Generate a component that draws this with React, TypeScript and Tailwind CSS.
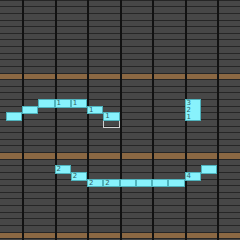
const ROWS = 38;
const BEATS = 8;

type Note = { col: number; row: number; span?: number; labels?: string[] };

const notes: Note[] = [
  // upper phrase
  { col: 1, row: 18 },
  { col: 2, row: 17 },
  { col: 3, row: 16 },
  { col: 4, row: 16, labels: ["1"] },
  { col: 5, row: 16, labels: ["1"] },
  { col: 6, row: 17, labels: ["1"] },
  { col: 7, row: 18, labels: ["1"] },
  { col: 12, row: 16, span: 3, labels: ["3", "2", "1"] },
  // lower phrase
  { col: 4, row: 26, labels: ["2"] },
  { col: 5, row: 27, labels: ["2"] },
  { col: 6, row: 28, labels: ["2"] },
  { col: 7, row: 28, labels: ["2"] },
  { col: 8, row: 28 },
  { col: 9, row: 28 },
  { col: 10, row: 28 },
  { col: 11, row: 28 },
  { col: 12, row: 27, labels: ["4"] },
  { col: 13, row: 26 },
];

export default function App() {
  return (
    <div className="w-[240px] h-[240px] overflow-hidden bg-[#2a2a2a]">
      <div className="-ml-[10.5px] -mt-[6px] grid grid-cols-[repeat(16,16.25px)] grid-rows-[repeat(38,6.625px)]">
        {/* Rows */}
        {Array.from({ length: ROWS }).map((_, r) => (
          <div
            key={"r" + r}
            style={{ gridRow: r + 1, gridColumn: "1 / -1" }}
            className={`border-b border-[#262626] ${
              r % 12 === 0 ? "bg-[#8b6843]" : "bg-[#474747]"
            }`}
          />
        ))}

        {/* Beat lines */}
        {Array.from({ length: BEATS }).map((_, j) => (
          <div
            key={"b" + j}
            style={{ gridRow: "1 / -1", gridColumn: `${2 * j + 1} / span 2` }}
            className="border-l-2 border-[#121212]"
          />
        ))}

        {/* Cursor cell */}
        <div
          style={{ gridRow: 20, gridColumn: 8 }}
          className="-mt-[1px] -mb-[1px] border border-[#cfcfcf]"
        />

        {/* Notes */}
        {notes.map((n, i) => (
          <div
            key={"n" + i}
            style={{ gridRow: `${n.row + 1} / span ${n.span ?? 1}`, gridColumn: n.col + 1 }}
            className="-mt-[1px] -mb-[1px] flex flex-col justify-around border border-[#4fb3bd] bg-[#88f2fc] pl-[1px]"
          >
            {n.labels?.map((l, k) => (
              <span
                key={k}
                className="font-['DejaVu_Sans',sans-serif] text-[7px] leading-none text-[#2f5d63]"
              >
                {l}
              </span>
            ))}
          </div>
        ))}
      </div>
    </div>
  );
}
